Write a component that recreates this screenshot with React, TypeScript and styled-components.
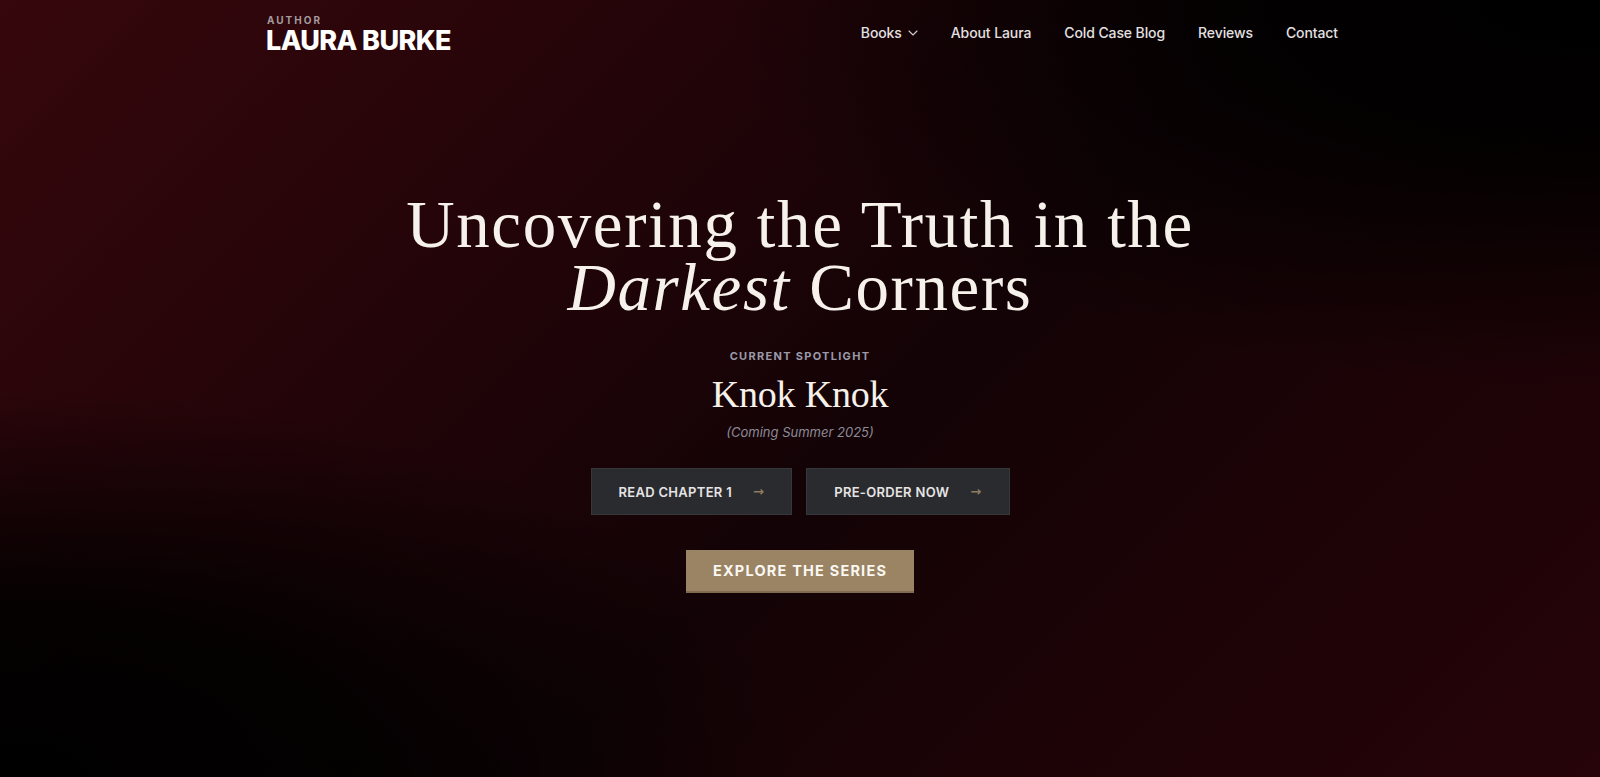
import React from "react";
import styled, { createGlobalStyle } from "styled-components";

const GlobalStyle = createGlobalStyle`
  * { box-sizing: border-box; }
  html, body { margin: 0; padding: 0; background: #000; }
  body { font-family: Inter, "Noto Sans", sans-serif; -webkit-font-smoothing: antialiased; }
`;

const Page = styled.div`
  min-height: 777px;
  background:
    radial-gradient(ellipse 55% 50% at 100% 0%, rgba(0,0,0,1) 0%, rgba(0,0,0,0.85) 40%, rgba(0,0,0,0) 100%),
    radial-gradient(ellipse 50% 50% at 0% 100%, rgba(0,0,0,1) 0%, rgba(0,0,0,0.85) 45%, rgba(0,0,0,0) 100%),
    linear-gradient(135deg, #36070c 0%, #200408 35%, #130306 55%, #1c0306 75%, #260409 100%);
  color: #fff;
  display: flex;
  flex-direction: column;
`;

const Header = styled.header`
  width: 100%;
  max-width: 1120px;
  margin: 0 auto;
  padding: 14px 22px 0 26px;
  display: flex;
  justify-content: space-between;
  align-items: flex-start;
`;

const Brand = styled.a`
  display: flex;
  flex-direction: column;
  text-decoration: none;
`;

const BrandLabel = styled.span`
  font-size: 10px;
  line-height: 12px;
  font-weight: 700;
  letter-spacing: 2px;
  color: #a39b9d;
  padding-left: 1px;
`;

const BrandName = styled.span`
  font-size: 27px;
  line-height: 30px;
  font-weight: 800;
  letter-spacing: -0.6px;
  color: #ffffff;
`;

const Nav = styled.nav`
  display: flex;
  align-items: center;
  gap: 33px;
  padding-top: 9px;
`;

const NavLink = styled.a`
  display: flex;
  align-items: center;
  gap: 6px;
  font-size: 14px;
  line-height: 20px;
  font-weight: 500;
  letter-spacing: -0.1px;
  color: #e4e0e1;
  text-decoration: none;
`;

const Hero = styled.main`
  display: flex;
  flex-direction: column;
  align-items: center;
  text-align: center;
  padding-top: 137px;
`;

const Headline = styled.h1`
  margin: 0;
  font-family: "Liberation Serif", "DejaVu Serif", serif;
  font-weight: 400;
  font-size: 67px;
  line-height: 63px;
  letter-spacing: 1.6px;
  color: #f6f1ea;
  em { font-style: italic; }
`;

const Eyebrow = styled.div`
  margin-top: 30px;
  font-size: 11px;
  line-height: 14px;
  font-weight: 700;
  letter-spacing: 1.3px;
  color: #9a9aa9;
`;

const BookTitle = styled.h2`
  margin: 7px 0 0;
  font-family: "Liberation Serif", "DejaVu Serif", serif;
  font-weight: 400;
  font-size: 38px;
  line-height: 49px;
  letter-spacing: -0.2px;
  color: #f6f1ea;
`;

const Release = styled.div`
  margin-top: 4px;
  font-size: 13px;
  line-height: 18px;
  font-style: italic;
  color: #8d8b96;
`;

const ButtonRow = styled.div`
  margin-top: 27px;
  display: flex;
  gap: 14px;
`;

const DarkButton = styled.a`
  height: 47px;
  display: flex;
  align-items: center;
  gap: 21px;
  padding: 0 27px;
  background: #2a2b2f;
  border: 1px solid #36373b;
  color: #e6e4e4;
  font-size: 13px;
  font-weight: 600;
  letter-spacing: 0.3px;
  text-decoration: none;
`;

const Arrow = styled.span`
  font-family: "DejaVu Sans", sans-serif;
  font-size: 13px;
  color: #8e7c60;
`;

const GoldButton = styled.a`
  margin-top: 35px;
  height: 43px;
  display: flex;
  align-items: center;
  padding: 0 27px;
  background: #9a8463;
  border-bottom: 2px solid #7f6c50;
  color: #fbf8f3;
  font-size: 14.5px;
  font-weight: 700;
  letter-spacing: 1.2px;
  text-decoration: none;
`;

const Chevron = () => (
  <svg width="10" height="6" viewBox="0 0 10 6" fill="none">
    <path d="M1 1l4 4 4-4" stroke="#cfcacb" strokeWidth="1.1" strokeLinecap="round" strokeLinejoin="round" />
  </svg>
);

export default function App() {
  return (
    <>
      <GlobalStyle />
      <Page>
        <Header>
          <Brand href="#">
            <BrandLabel>AUTHOR</BrandLabel>
            <BrandName>LAURA BURKE</BrandName>
          </Brand>
          <Nav>
            <NavLink href="#">Books <Chevron /></NavLink>
            <NavLink href="#">About Laura</NavLink>
            <NavLink href="#">Cold Case Blog</NavLink>
            <NavLink href="#">Reviews</NavLink>
            <NavLink href="#">Contact</NavLink>
          </Nav>
        </Header>
        <Hero>
          <Headline>
            Uncovering the Truth in the
            <br />
            <em>Darkest</em> Corners
          </Headline>
          <Eyebrow>CURRENT SPOTLIGHT</Eyebrow>
          <BookTitle>Knok Knok</BookTitle>
          <Release>(Coming Summer 2025)</Release>
          <ButtonRow>
            <DarkButton href="#">READ CHAPTER 1 <Arrow>→</Arrow></DarkButton>
            <DarkButton href="#">PRE-ORDER NOW <Arrow>→</Arrow></DarkButton>
          </ButtonRow>
          <GoldButton href="#">EXPLORE THE SERIES</GoldButton>
        </Hero>
      </Page>
    </>
  );
}
